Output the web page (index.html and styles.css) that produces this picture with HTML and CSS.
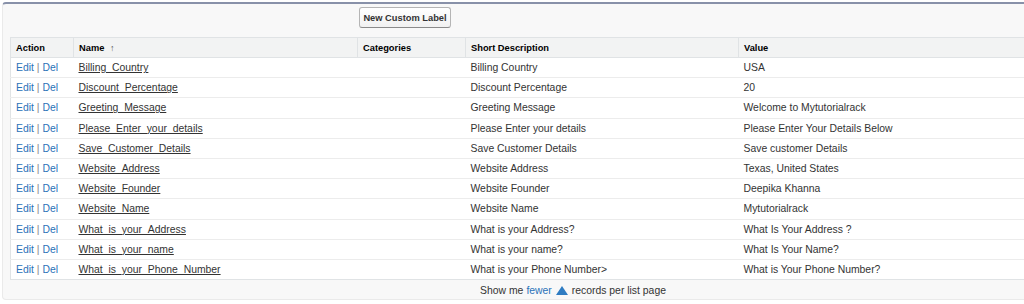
FILE: index.html
```html
<!DOCTYPE html>
<html>
<head>
<meta charset="utf-8">
<link rel="stylesheet" href="styles.css">
</head>
<body>
<div class="panel">
  <div class="pb-header">
    <button class="btn">New Custom Label</button>
  </div>
  <table class="list">
    <colgroup>
      <col class="c-action"><col class="c-name"><col class="c-cat"><col class="c-desc"><col>
    </colgroup>
    <thead>
      <tr class="header-row">
        <th>Action</th>
        <th>Name <span class="sort">&#8593;</span></th>
        <th>Categories</th>
        <th>Short Description</th>
        <th>Value</th>
      </tr>
    </thead>
    <tbody>
      <tr><td><a class="act">Edit</a> <span class="sep">|</span> <a class="act">Del</a></td><td><a class="name">Billing_Country</a></td><td></td><td>Billing Country</td><td>USA</td></tr>
      <tr><td><a class="act">Edit</a> <span class="sep">|</span> <a class="act">Del</a></td><td><a class="name">Discount_Percentage</a></td><td></td><td>Discount Percentage</td><td>20</td></tr>
      <tr><td><a class="act">Edit</a> <span class="sep">|</span> <a class="act">Del</a></td><td><a class="name">Greeting_Message</a></td><td></td><td>Greeting Message</td><td>Welcome to Mytutorialrack</td></tr>
      <tr><td><a class="act">Edit</a> <span class="sep">|</span> <a class="act">Del</a></td><td><a class="name">Please_Enter_your_details</a></td><td></td><td>Please Enter your details</td><td>Please Enter Your Details Below</td></tr>
      <tr><td><a class="act">Edit</a> <span class="sep">|</span> <a class="act">Del</a></td><td><a class="name">Save_Customer_Details</a></td><td></td><td>Save Customer Details</td><td>Save customer Details</td></tr>
      <tr><td><a class="act">Edit</a> <span class="sep">|</span> <a class="act">Del</a></td><td><a class="name">Website_Address</a></td><td></td><td>Website Address</td><td>Texas, United States</td></tr>
      <tr><td><a class="act">Edit</a> <span class="sep">|</span> <a class="act">Del</a></td><td><a class="name">Website_Founder</a></td><td></td><td>Website Founder</td><td>Deepika Khanna</td></tr>
      <tr><td><a class="act">Edit</a> <span class="sep">|</span> <a class="act">Del</a></td><td><a class="name">Website_Name</a></td><td></td><td>Website Name</td><td>Mytutorialrack</td></tr>
      <tr><td><a class="act">Edit</a> <span class="sep">|</span> <a class="act">Del</a></td><td><a class="name">What_is_your_Address</a></td><td></td><td>What is your Address?</td><td>What Is Your Address ?</td></tr>
      <tr><td><a class="act">Edit</a> <span class="sep">|</span> <a class="act">Del</a></td><td><a class="name">What_is_your_name</a></td><td></td><td>What is your name?</td><td>What Is Your Name?</td></tr>
      <tr><td><a class="act">Edit</a> <span class="sep">|</span> <a class="act">Del</a></td><td><a class="name">What_is_your_Phone_Number</a></td><td></td><td>What is your Phone Number&gt;</td><td>What is Your Phone Number?</td></tr>
    </tbody>
  </table>
  <div class="footer">
    Show me <a class="more">fewer</a>
    <svg class="arrow" width="12" height="9" viewBox="0 0 12 9"><polygon points="6,0 12,9 0,9" fill="#2f7cc2"/></svg>
    records per list page
  </div>
</div>
</body>
</html>
```

FILE: styles.css
```css
html, body {
  margin: 0;
  padding: 0;
  background: #ffffff;
  overflow: hidden;
}
body {
  padding: 2px 0 0 2px;
  font-family: "Liberation Sans", Arial, sans-serif;
  font-size: 10.4px;
  color: #333;
}
.panel {
  width: 1022px;
  height: 298px;
  box-sizing: border-box;
  background: #f8f8f8;
  border: 1px solid #eaeaea;
  border-right: none;
  border-top: 2px solid #8891a9;
  border-radius: 4px 0 0 4px;
  padding: 0 0 0 7px;
}
.pb-header {
  height: 33px;
  display: flex;
  align-items: flex-start;
  padding-left: 349px;
  box-sizing: border-box;
  padding-top: 3px;
}
.btn {
  height: 21px;
  width: 92px;
  padding: 0;
  font-family: "Liberation Sans", Arial, sans-serif;
  font-size: 9.3px;
  font-weight: bold;
  color: #333;
  background: linear-gradient(#ffffff, #f1f1f1);
  border: 1px solid #b5b5b5;
  border-bottom-color: #8a8a8a;
  border-radius: 3px;
}
.list {
  width: 1014px;
  border-collapse: collapse;
  table-layout: fixed;
  background: #fff;
  border: 1px solid #e0e3e5;
  border-right: none;
}
.c-action { width: 63px; }
.c-name { width: 284px; }
.c-cat { width: 108px; }
.c-desc { width: 273px; }
.header-row th {
  background: #f2f3f3;
  font-size: 9.3px;
  font-weight: bold;
  color: #000;
  text-align: left;
  height: 20px;
  padding: 0 2px 0 5px;
  border-left: 1px solid #e0e3e5;
  border-bottom: 1px solid #e0e3e5;
  box-sizing: border-box;
}
.header-row th:first-child { border-left: none; }
.sort { font-weight: normal; color: #555; font-size: 9px; margin-left: 3px; }
.list td {
  height: 20.2px;
  padding: 0 2px 0 5px;
  border-bottom: 1px solid #ececec;
  white-space: nowrap;
  color: #333;
  box-sizing: border-box;
}
.list tbody tr:last-child td { border-bottom: none; }
.act { color: #2a72b8; text-decoration: none; }
.sep { color: #888; }
.name { color: #333; text-decoration: underline; }
.footer {
  width: 1014px;
  box-sizing: border-box;
  padding-left: 112px;
  height: 20px;
  display: flex;
  align-items: center;
  justify-content: center;
  gap: 3px;
  color: #333;
}
.more { color: #2a72b8; }
.arrow { display: block; margin: 0 1px; }
```
